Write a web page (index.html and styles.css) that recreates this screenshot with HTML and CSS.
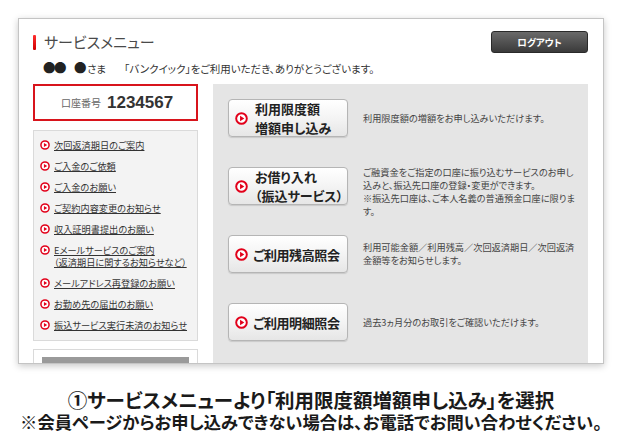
FILE: index.html
```html
<!DOCTYPE html>
<html lang="ja">
<head>
    <meta charset="UTF-8">
    <meta name="viewport" content="width=device-width, initial-scale=1.0">
    <title>サービスメニュー</title>
    <link rel="stylesheet" href="styles.css">
</head>
<body>
    <svg class="defs" width="0" height="0">
        <symbol id="play" viewBox="0 0 12 12">
            <circle cx="6" cy="6" r="4.9" fill="#fff" stroke="#e2001a" stroke-width="1.8"/>
            <path d="M4.7 3.5 L8.6 6 L4.7 8.5 Z" fill="#e2001a"/>
        </symbol>
    </svg>
    <div class="panel">
        <div class="panel-head">
            <h1 class="title">サービスメニュー</h1>
            <a class="logout">ログアウト</a>
        </div>
        <p class="greeting"><span class="dots">●●</span><span class="dots dots-last">●</span>さま<span class="thanks">「バンクイック」をご利用いただき、ありがとうございます。</span></p>
        <div class="main">
            <aside class="side">
                <div class="account">
                    <span class="account-label">口座番号</span>
                    <span class="account-no">1234567</span>
                </div>
                <ul class="links">
                    <li><svg class="ico"><use href="#play"/></svg><a>次回返済期日のご案内</a></li>
                    <li><svg class="ico"><use href="#play"/></svg><a>ご入金のご依頼</a></li>
                    <li><svg class="ico"><use href="#play"/></svg><a>ご入金のお願い</a></li>
                    <li><svg class="ico"><use href="#play"/></svg><a>ご契約内容変更のお知らせ</a></li>
                    <li><svg class="ico"><use href="#play"/></svg><a>収入証明書提出のお願い</a></li>
                    <li><svg class="ico"><use href="#play"/></svg><a>Eメールサービスのご案内<br>（返済期日に関するお知らせなど）</a></li>
                    <li><svg class="ico"><use href="#play"/></svg><a>メールアドレス再登録のお願い</a></li>
                    <li><svg class="ico"><use href="#play"/></svg><a>お勤め先の届出のお願い</a></li>
                    <li><svg class="ico"><use href="#play"/></svg><a>振込サービス実行未済のお知らせ</a></li>
                </ul>
                <div class="side-box"><div class="side-bar"></div></div>
            </aside>
            <section class="menu">
                <div class="menu-row">
                    <a class="menu-btn"><svg class="btn-ico"><use href="#play"/></svg><span>利用限度額<br>増額申し込み</span></a>
                    <p class="menu-desc">利用限度額の増額をお申し込みいただけます。</p>
                </div>
                <div class="menu-row">
                    <a class="menu-btn"><svg class="btn-ico"><use href="#play"/></svg><span>お借り入れ<br>（振込サービス）</span></a>
                    <p class="menu-desc menu-desc-long">ご融資金をご指定の口座に振り込むサービスのお申し<br>込みと、振込先口座の登録・変更ができます。<br>※振込先口座は、ご本人名義の普通預金口座に限りま<br>す。</p>
                </div>
                <div class="menu-row">
                    <a class="menu-btn menu-btn-single"><svg class="btn-ico"><use href="#play"/></svg><span>ご利用残高照会</span></a>
                    <p class="menu-desc">利用可能金額／利用残高／次回返済期日／次回返済<br>金額等をお知らせします。</p>
                </div>
                <div class="menu-row">
                    <a class="menu-btn menu-btn-single"><svg class="btn-ico"><use href="#play"/></svg><span>ご利用明細照会</span></a>
                    <p class="menu-desc">過去3ヵ月分のお取引をご確認いただけます。</p>
                </div>
            </section>
        </div>
    </div>
    <div class="caption">
        <p class="caption-main">①サービスメニューより「利用限度額増額申し込み」を選択</p>
        <p class="caption-note">※会員ページからお申し込みできない場合は、お電話でお問い合わせください。</p>
    </div>
</body>
</html>
```
FILE: styles.css
```css
body {
    margin: 0;
    background: #fff;
    font-family: "Noto Sans CJK JP", "Noto Sans", sans-serif;
    color: #333;
}
.defs {
    position: absolute;
}
.panel {
    margin: 18px 0 0 18px;
    width: 586px;
    height: 346px;
    box-sizing: border-box;
    border: 1px solid #c4c4c4;
    box-shadow: 0 2px 7px rgba(0, 0, 0, 0.22);
    padding: 0 15px 0 14px;
    display: flex;
    flex-direction: column;
    overflow: hidden;
    background: #fff;
}
.panel-head {
    margin-top: 12px;
    height: 22px;
    flex-shrink: 0;
    display: flex;
    align-items: center;
    justify-content: space-between;
}
.title {
    margin: 0;
    font-size: 15px;
    font-weight: normal;
    color: #4a4a4a;
    font-feature-settings: "palt";
    display: flex;
    align-items: center;
    line-height: 22px;
}
.title::before {
    content: "";
    width: 3px;
    height: 15px;
    margin-right: 8px;
    background: linear-gradient(#ff3030, #d00000);
    border-radius: 1px;
}
.logout {
    width: 97px;
    height: 22px;
    box-sizing: border-box;
    border: 1px solid #2a2a2a;
    border-radius: 3px;
    background: linear-gradient(#6a6a6a, #3a3a3a);
    color: #fff;
    font-size: 9.5px;
    font-weight: bold;
    line-height: 20px;
    text-align: center;
    font-feature-settings: "palt";
}
.greeting {
    margin: 8px 0 0 10px;
    height: 14px;
    flex-shrink: 0;
    font-size: 10.5px;
    line-height: 14px;
    color: #333;
    font-feature-settings: "palt";
}
.dots {
    font-size: 12.5px;
    color: #222;
    letter-spacing: -1.5px;
}
.dots-last {
    margin-left: 9px;
    margin-right: 2px;
}
.thanks {
    margin-left: 18px;
}
.main {
    margin-top: 9px;
    flex: 1;
    min-height: 0;
    display: flex;
    gap: 15px;
}
.side {
    width: 165px;
    flex-shrink: 0;
    display: flex;
    flex-direction: column;
}
.account {
    height: 37px;
    flex-shrink: 0;
    box-sizing: border-box;
    border: 2px solid #d8141c;
    display: flex;
    align-items: center;
    padding-left: 26px;
    gap: 6px;
}
.account-label {
    font-size: 10px;
    color: #666;
}
.account-no {
    font-family: "Liberation Sans", Arial, sans-serif;
    font-size: 17px;
    font-weight: bold;
    color: #333;
}
.links {
    list-style: none;
    flex-shrink: 0;
    margin: 9px 0 0;
    padding: 8px 0 9px 6px;
    background: #f3f3f3;
    border: 1px solid #dadada;
    display: flex;
    flex-direction: column;
    gap: 9px;
}
.links li {
    display: flex;
    align-items: flex-start;
    gap: 4px;
    font-size: 9.2px;
    line-height: 12px;
    font-feature-settings: "palt";
}
.links a {
    color: #333;
    text-decoration: underline;
    text-underline-offset: 1px;
}
.ico {
    width: 10px;
    height: 10px;
    margin-top: 1px;
    flex-shrink: 0;
}
.side-box {
    margin-top: 8px;
    height: 40px;
    flex-shrink: 0;
    border: 1px solid #dadada;
    padding: 7px 8px 0;
}
.side-bar {
    height: 30px;
    background: #9a9a9a;
}
.menu {
    flex: 1;
    background: #e5e5e5;
    padding: 15px 0 0 15px;
    display: flex;
    flex-direction: column;
    gap: 30px;
}
.menu-row {
    height: 38px;
    flex-shrink: 0;
    display: flex;
    align-items: center;
    gap: 15px;
}
.menu-btn {
    width: 120px;
    height: 38px;
    box-sizing: border-box;
    flex-shrink: 0;
    border: 1px solid #b5b5b5;
    border-radius: 4px;
    background: linear-gradient(#ffffff, #f4f4f4 50%, #e6e6e6);
    box-shadow: 0 1px 1px rgba(0, 0, 0, 0.12);
    display: flex;
    align-items: center;
    padding-left: 6px;
    gap: 7px;
    font-size: 13px;
    font-weight: bold;
    line-height: 19px;
    color: #222;
    font-feature-settings: "palt";
}
.menu-btn-single {
    gap: 5px;
    letter-spacing: -0.4px;
}
.btn-ico {
    width: 13px;
    height: 13px;
    flex-shrink: 0;
}
.menu-desc {
    margin: 0;
    font-size: 9.2px;
    line-height: 13px;
    color: #444;
    white-space: nowrap;
    font-feature-settings: "palt";
}
.menu-desc-long {
    margin-top: 12px;
}
.caption {
    text-align: center;
    color: #1a1a1a;
    font-weight: bold;
    margin-top: 25px;
}
.caption p {
    margin: 0;
    white-space: nowrap;
}
.caption-main {
    font-size: 19.5px;
    line-height: 22px;
    font-feature-settings: "palt";
}
.caption-note {
    font-size: 17.3px;
    line-height: 22px;
    font-feature-settings: "palt";
}
```
